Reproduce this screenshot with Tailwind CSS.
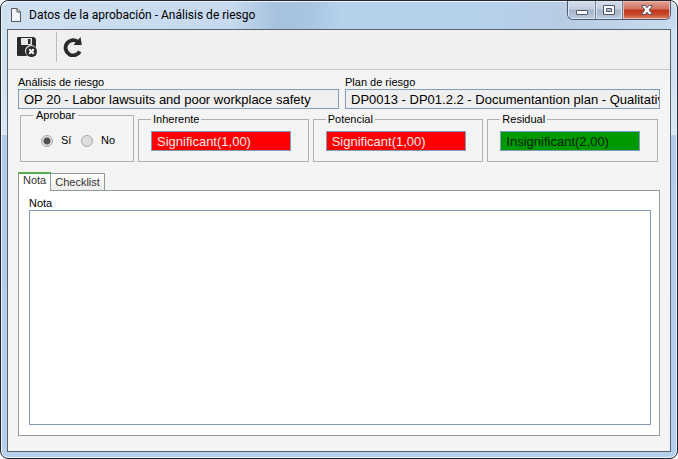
<!DOCTYPE html>
<html lang="es">
<head>
    <meta charset="UTF-8">
    <meta name="viewport" content="width=device-width, initial-scale=1.0">
    <title>Datos de la aprobación - Análisis de riesgo</title>
    <script src="https://cdn.jsdelivr.net/npm/@tailwindcss/browser@4"></script>
</head>
<body class="bg-white font-['Liberation_Sans',Arial,sans-serif] text-[11px] leading-[13px] text-black">
<!-- Window frame -->
<div class="flex flex-col min-h-screen px-[6px] pb-[6px] border border-[#25272f] rounded-lg bg-[linear-gradient(to_bottom,#cddff1_0px,#d3e2f2_90px,#dbe8f5_134px,#b2cde9_134px,#b5d0ec_100%)] shadow-[inset_0_0_0_1px_#eaf3fb]">

    <!-- Title bar -->
    <header class="flex items-start justify-between h-7 -mx-[5px] pl-2 pr-[5px] rounded-t-lg bg-[linear-gradient(to_right,#cfe0f1_0px,#c6d9ee_230px,#a7c2de_275px,#a9c4e0_305px,#b6d1ec_340px,#b6d1ec_480px,#b8cce4_560px,#c9dbee_100%)] shadow-[inset_0_1px_0_#eaf3fb]">
        <div class="flex items-center gap-[7px] h-7">
            <svg class="w-3 h-[14px]" viewBox="0 0 12 14" fill="#f0f3f8" stroke="#555" stroke-width="1">
                <path d="M1.500 .5H7L10.500 4V13.500H1.500Z" />
                <path d="M7 .5V4H10.500" fill="none" />
            </svg>
            <h1 class="font-[Roboto,'Open_Sans',sans-serif] text-[12px] leading-4">Datos de la aprobación - Análisis de riesgo</h1>
        </div>
        <div class="flex h-[19px] border border-t-0 border-[#4d5a72] rounded-b-md overflow-hidden">
            <button type="button" aria-label="Minimizar" class="flex items-center justify-center w-[28px] border-r border-[#6d7c94] bg-[linear-gradient(to_bottom,#d3dde9_0%,#c3cfde_45%,#a3b4ca_50%,#bccde1_100%)] shadow-[inset_0_0_0_1px_#dbe5f0]">
                <svg class="w-3 h-[10px]" viewBox="0 0 12 10">
                    <rect x=".5" y="5.500" width="11" height="4" rx=".5" fill="#fff" stroke="#535666" />
                </svg>
            </button>
            <button type="button" aria-label="Maximizar" class="flex items-center justify-center w-[27px] border-r border-[#6d7c94] bg-[linear-gradient(to_bottom,#d3dde9_0%,#c3cfde_45%,#a3b4ca_50%,#bccde1_100%)] shadow-[inset_0_0_0_1px_#dbe5f0]">
                <svg class="w-3 h-[10px]" viewBox="0 0 12 10">
                    <path d="M.5 .5H11.500V9.500H.5ZM3.500 3.500V6.500H8.500V3.500Z" fill="#fff" fill-rule="evenodd" stroke="#535666" />
                </svg>
            </button>
            <button type="button" aria-label="Cerrar" class="flex items-center justify-center w-[47px] bg-[linear-gradient(to_bottom,#e3a497_0%,#d4705d_45%,#bd3318_50%,#c8492d_75%,#e08a6c_100%)] shadow-[inset_0_0_0_1px_#eab8ac]">
                <svg class="w-3 h-[10px]" viewBox="0 0 12 10" fill="#fff" stroke="#535666" stroke-linejoin="round">
                    <path d="M.5 .5H4L6 2.700 8 .5H11.500L8.200 5 11.500 9.500H8L6 7.300 4 9.500H.5L3.800 5Z" />
                </svg>
            </button>
        </div>
    </header>

    <!-- Client area -->
    <main class="flex flex-col flex-1 border border-[#596270] bg-[#f4f4f4]">
        <!-- Toolbar -->
        <div class="flex items-center h-10 pb-[6px] px-2 border-b border-[#c8c8c8] bg-[#f0f0f0]">
            <button type="button" aria-label="Guardar y cerrar" class="ml-px">
                <svg class="w-5 h-5" viewBox="0 0 20 20">
                    <path d="M1 0H17L19 2V18Q19 19 18 19H1Q0 19 0 18V1Q0 0 1 0Z" fill="#2b2b2b" />
                    <path d="M4 1H15V7Q15 8 14 8H5Q4 8 4 7Z" fill="#e8e8e8" />
                    <path d="M11 2H13.500V7H11Z" fill="#2b2b2b" />
                    <circle cx="14" cy="14" r="6" fill="#f0f0f0" />
                    <circle cx="14.500" cy="14.500" r="5.500" fill="#2b2b2b" />
                    <path d="M12.300 12.300L16.700 16.700M16.700 12.300L12.300 16.700" stroke="#fff" stroke-width="2" />
                </svg>
            </button>
            <div class="w-px h-[30px] ml-[19px] bg-[#bcbcbc]"></div>
            <button type="button" aria-label="Actualizar" class="ml-[6px]">
                <svg class="w-5 h-5" viewBox="0 0 20 20">
                    <path d="M14.500 4.500A7.600 7.600 0 1 0 16.800 14.500" fill="none" stroke="#2b2b2b" stroke-width="3.800" />
                    <path d="M17.500 0L18.800 8H10.500Z" fill="#2b2b2b" />
                </svg>
            </button>
        </div>

        <form class="flex flex-col flex-1 px-[10px] pt-[6px] pb-[15px]">
            <div class="flex gap-[6px]">
                <div class="w-1/2 shrink-0">
                    <label for="risk" class="block">Análisis de riesgo</label>
                    <input id="risk" type="text" readonly value="OP 20 - Labor lawsuits and poor workplace safety" class="block w-full h-5 pl-[5px] border border-[#7f9db9] bg-[#efefef] text-[13px]">
                </div>
                <div class="flex-1">
                    <label for="plan" class="block">Plan de riesgo</label>
                    <input id="plan" type="text" readonly value="DP0013 - DP01.2.2 - Documentantion plan - Qualitative" class="block w-full h-5 pl-[5px] border border-[#7f9db9] bg-[#efefef] text-[13px]">
                </div>
            </div>

            <div class="flex gap-1 px-[2px]">
                <fieldset class="w-[114px] h-[53px] pl-5 border border-[#b0b0b0]">
                    <legend class="-ml-2 px-[3px]">Aprobar</legend>
                    <div class="flex items-center gap-2 pt-3">
                        <input id="yes" type="radio" name="approve" checked class="appearance-none size-3 rounded-full border border-[#a8a8a8] bg-[#e4e4e4] checked:bg-[radial-gradient(circle,#505050_3px,#e4e4e4_4px)]">
                        <label for="yes" class="w-3">Sí</label>
                        <input id="no" type="radio" name="approve" class="appearance-none size-3 rounded-full border border-[#a8a8a8] bg-[#dedede]">
                        <label for="no">No</label>
                    </div>
                </fieldset>
                <fieldset class="flex-1 min-w-0 h-[49px] mt-1 px-3 border border-[#b0b0b0]">
                    <legend class="px-[2px]">Inherente</legend>
                    <input type="text" readonly aria-label="Inherente" value="Significant(1,00)" class="block w-[140px] h-5 mt-[5px] pl-[5px] border border-[#7f9db9] bg-[#ff0000] text-[13px] text-[#ececec]">
                </fieldset>
                <fieldset class="flex-1 min-w-0 h-[49px] mt-1 px-3 border border-[#b0b0b0]">
                    <legend class="px-[2px]">Potencial</legend>
                    <input type="text" readonly aria-label="Potencial" value="Significant(1,00)" class="block w-[140px] h-5 mt-[5px] pl-[5px] border border-[#7f9db9] bg-[#ff0000] text-[13px] text-[#ececec]">
                </fieldset>
                <fieldset class="flex-1 min-w-0 h-[49px] mt-1 px-3 border border-[#b0b0b0]">
                    <legend class="px-[2px]">Residual</legend>
                    <input type="text" readonly aria-label="Residual" value="Insignificant(2,00)" class="block w-[140px] h-5 mt-[5px] pl-[5px] border border-[#7f9db9] bg-[#009900] text-[13px] text-[#002200]">
                </fieldset>
            </div>

            <!-- Tabs -->
            <div class="flex items-end mt-[10px] text-[#333333]">
                <button type="button" class="relative z-10 h-[19px] -mb-px px-1 pb-1 border-x border-t-2 border-x-[#919b9c] border-t-[#5aad4e] bg-white">Nota</button>
                <button type="button" class="h-[17px] px-1 border border-l-0 border-b-0 border-[#919b9c] bg-[linear-gradient(to_bottom,#ffffff,#ececea)]">Checklist</button>
            </div>
            <div class="flex flex-col flex-1 pt-[6px] pl-[10px] pr-2 pb-[10px] border border-[#919b9c] bg-white">
                <label for="note">Nota</label>
                <textarea id="note" class="flex-1 w-full p-1 border border-[#7f9db9] bg-white resize-none"></textarea>
            </div>
        </form>
    </main>
</div>
</body>
</html>
